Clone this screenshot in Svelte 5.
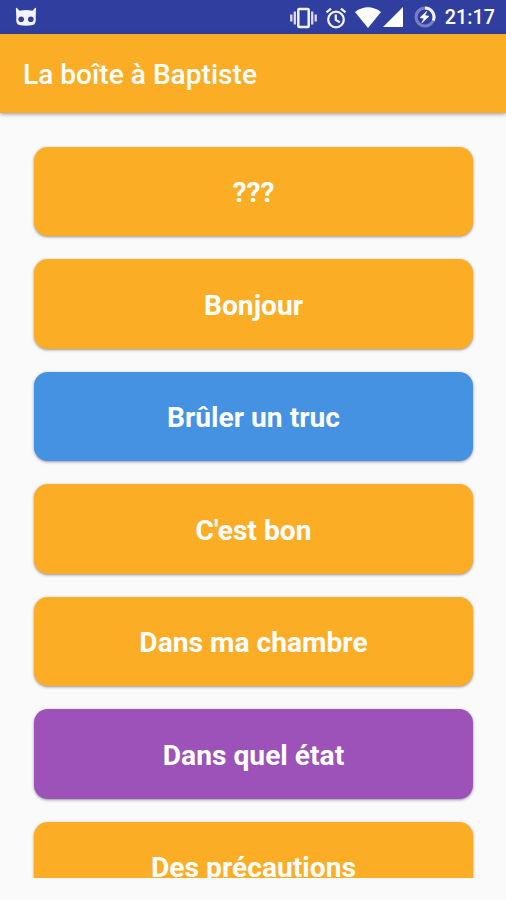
<script>
  const sounds = [
    { label: '???', tone: 'amber' },
    { label: 'Bonjour', tone: 'amber' },
    { label: 'Brûler un truc', tone: 'blue' },
    { label: "C'est bon", tone: 'amber' },
    { label: 'Dans ma chambre', tone: 'amber' },
    { label: 'Dans quel état', tone: 'purple' },
    { label: 'Des précautions', tone: 'amber' },
  ];
</script>

<div class="screen">
  <div class="status">
    <svg class="cat" width="22" height="20" viewBox="0 0 22 20" aria-hidden="true">
      <path fill="#f1f2fa" fill-rule="evenodd" d="M.9 1.300Q1.300.5 2 1.100L4.600 3.700Q11 2.300 17.400 3.700L20 1.100q.7-.6 1.100.2l-.4 9q.5 5-1.300 7-1.600 1.400-8.400 1.400t-8.400-1.400Q.8 15.300 1.300 10.300zM6.200 9.400a2.800 2.800 0 1 0 0 5.600 2.800 2.800 0 0 0 0-5.600zm9.600 0a2.800 2.800 0 1 0 0 5.600 2.800 2.800 0 0 0 0-5.600z" />
    </svg>
    <div class="system">
      <svg class="vibrate" width="27" height="22" viewBox="0 0 27 22" aria-hidden="true">
        <path d="M1.300 7.500v7M4.800 4.500v13M22.200 4.500v13M25.700 7.500v7" stroke="#d9dcf0" stroke-width="2.300" />
        <rect x="8.300" y="2" width="10.400" height="18" rx="1" fill="none" stroke="#f1f2fa" stroke-width="2.500" />
      </svg>
      <svg class="alarm" width="22" height="22" viewBox="0 0 22 22" aria-hidden="true">
        <g fill="none" stroke="#f1f2fa" stroke-width="2.300">
          <circle cx="11" cy="12.500" r="7.800" />
          <path d="M1.500 5.400 6 1.700M20.500 5.400 16 1.700M10.800 7.500v5.400l4 2.400" />
        </g>
      </svg>
      <svg class="wifi" width="26" height="21" viewBox="0 0 26 21" aria-hidden="true">
        <path fill="#fff" d="M0 5Q13-4.300 26 5L13 21z" />
      </svg>
      <svg class="signal" width="20" height="20" viewBox="0 0 20 20" aria-hidden="true">
        <path fill="#fff" d="M20 0v20H0z" />
      </svg>
      <svg class="battery" width="22" height="22" viewBox="0 0 22 22" aria-hidden="true">
        <circle cx="11" cy="11" r="9" fill="none" stroke="#7780c2" stroke-width="3" />
        <path d="M11 2a9 9 0 0 1 8.200 12.700" fill="none" stroke="#f1f2fa" stroke-width="3" />
        <path fill="#fff" stroke="#fff" stroke-width=".6" d="m12.800 5.300-6.700 6.300 4 .8-2.300 4.500 7.200-6.700-4.200-.6z" />
      </svg>
      <span class="time">21:17</span>
    </div>
  </div>

  <header>La boîte à Baptiste</header>

  <main>
    {#each sounds as sound}
      <button class={sound.tone}>{sound.label}</button>
    {/each}
  </main>
</div>

<style>
  .screen {
    width: 506px;
    height: 900px;
    overflow: hidden;
    display: flex;
    flex-direction: column;
    background: #fafafa;
    font-family: Roboto, sans-serif;
    color: #fff;
  }
  svg {
    display: block;
    flex: none;
  }
  .status {
    flex: none;
    height: 34px;
    box-sizing: border-box;
    padding: 0 11px 0 15px;
    display: flex;
    align-items: center;
    justify-content: space-between;
    background: #303f9f;
  }
  .cat {
    margin-top: -1px;
  }
  .system {
    display: flex;
    align-items: center;
  }
  .vibrate {
    margin-top: 1px;
  }
  .alarm {
    margin-left: 8px;
    margin-top: 1px;
  }
  .wifi {
    margin-left: 8px;
  }
  .signal {
    margin-left: 2px;
  }
  .battery {
    margin-left: 11px;
  }
  .time {
    margin-left: 9px;
    font-size: 19.8px;
    font-weight: 500;
    line-height: 34px;
    padding-top: 1px;
    height: 34px;
    box-sizing: border-box;
  }
  header {
    flex: none;
    height: 79px;
    box-sizing: border-box;
    padding: 1px 0 0 23px;
    font-size: 28.1px;
    font-weight: 500;
    line-height: 79px;
    background: #fcad26;
    box-shadow: 0 1px 4px rgba(40, 40, 70, 0.5);
  }
  main {
    height: 765px;
    box-sizing: border-box;
    overflow: hidden;
    padding: 33.800px 33px 0 34px;
    display: flex;
    flex-direction: column;
    gap: 23px;
  }
  button {
    flex: none;
    height: 89.5px;
    padding: 2px 0 0;
    border: 0;
    border-radius: 14px;
    font: bold 28.2px Roboto, sans-serif;
    color: #fff;
    box-shadow: 0 1px 3px rgba(50, 40, 60, 0.5);
  }
  .amber {
    background: #fcad26;
  }
  .blue {
    background: #4592e3;
  }
  .purple {
    background: #9c52b8;
  }
</style>
